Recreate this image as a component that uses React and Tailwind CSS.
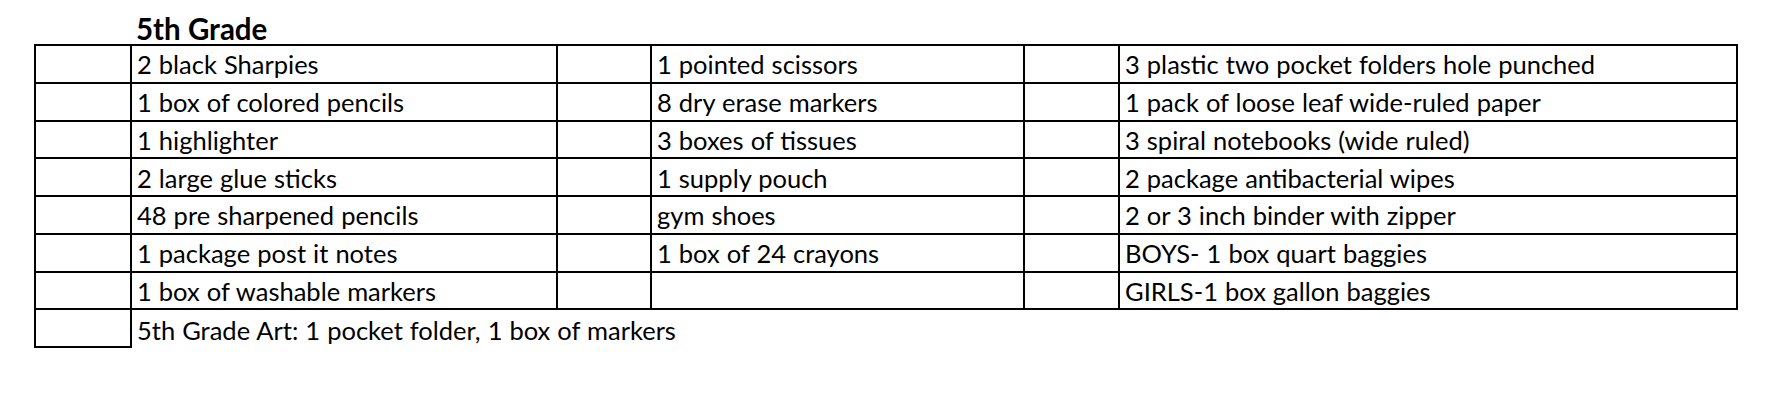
import React from 'react';

const rows = [
    ['2 black Sharpies', '1 pointed scissors', '3 plastic two pocket folders hole punched'],
    ['1 box of colored pencils', '8 dry erase markers', '1 pack of loose leaf wide-ruled paper'],
    ['1 highlighter', '3 boxes of tissues', '3 spiral notebooks (wide ruled)'],
    ['2 large glue sticks', '1 supply pouch', '2 package antibacterial wipes'],
    ['48 pre sharpened pencils', 'gym shoes', '2 or 3 inch binder with zipper'],
    ['1 package post it notes', '1 box of 24 crayons', 'BOYS- 1 box quart baggies'],
    ['1 box of washable markers', '', 'GIRLS-1 box gallon baggies'],
];

const cell = 'border-2 border-black pl-[5px] pr-1 pb-[4px] align-bottom whitespace-nowrap leading-none';

const App = () => {
    return (
        <div className="w-[1782px] h-[406px] bg-white text-black overflow-hidden" style={{ fontFamily: 'Lato, "Open Sans", sans-serif' }}>
            <div className="pt-[13px] pl-[34px]">
                {/* Title */}
                <h1 className="ml-[102px] text-[29.5px] font-bold leading-[31px] h-[31px]">5th Grade</h1>

                <table className="border-collapse text-[25.5px] [word-spacing:0.5px] table-fixed w-[1702px]">
                    <colgroup>
                        <col className="w-[96px]" />
                        <col className="w-[426px]" />
                        <col className="w-[94px]" />
                        <col className="w-[373px]" />
                        <col className="w-[95px]" />
                        <col className="w-[618px]" />
                    </colgroup>
                    <tbody>
                        {rows.map((r, i) => (
                            <tr key={i} className="h-[37.75px]">
                                <td className={cell}></td>
                                <td className={cell}>{r[0]}</td>
                                <td className={cell}></td>
                                <td className={cell}>{r[1]}</td>
                                <td className={cell}></td>
                                <td className={cell}>{r[2]}</td>
                            </tr>
                        ))}
                        <tr className="h-[37.75px]">
                            <td className={cell}></td>
                            <td colSpan={5} className="border-l-2 border-black pl-[5px] pb-[4px] align-bottom whitespace-nowrap leading-none">
                                5th Grade Art: 1 pocket folder, 1 box of markers
                            </td>
                        </tr>
                    </tbody>
                </table>
            </div>
        </div>
    );
};

export default App;
